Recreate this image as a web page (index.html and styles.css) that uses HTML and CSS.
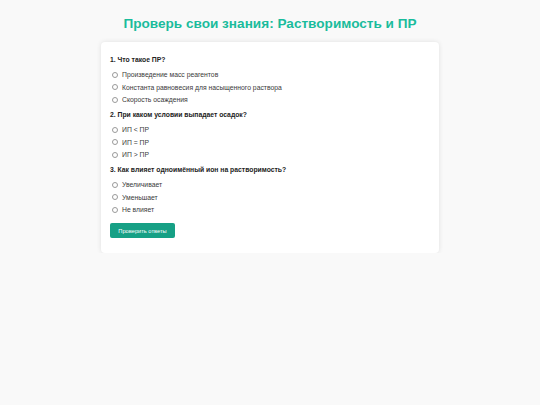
FILE: index.html
```html
<!DOCTYPE html>
<html lang="ru">
<head>
<meta charset="utf-8">
<title>Проверь свои знания</title>
<link rel="stylesheet" href="styles.css">
</head>
<body>
<h1 class="title">Проверь свои знания: Растворимость и ПР</h1>
<form class="card">
  <div class="question">
    <p class="q-text">1. Что такое ПР?</p>
    <label class="option"><input type="radio" name="q1"><span>Произведение масс реагентов</span></label>
    <label class="option"><input type="radio" name="q1"><span>Константа равновесия для насыщенного раствора</span></label>
    <label class="option"><input type="radio" name="q1"><span>Скорость осаждения</span></label>
  </div>
  <div class="question">
    <p class="q-text">2. При каком условии выпадает осадок?</p>
    <label class="option"><input type="radio" name="q2"><span>ИП &lt; ПР</span></label>
    <label class="option"><input type="radio" name="q2"><span>ИП = ПР</span></label>
    <label class="option"><input type="radio" name="q2"><span>ИП &gt; ПР</span></label>
  </div>
  <div class="question">
    <p class="q-text">3. Как влияет одноимённый ион на растворимость?</p>
    <label class="option"><input type="radio" name="q3"><span>Увеличивает</span></label>
    <label class="option"><input type="radio" name="q3"><span>Уменьшает</span></label>
    <label class="option"><input type="radio" name="q3"><span>Не влияет</span></label>
  </div>
  <button type="button" class="btn">Проверить ответы</button>
</form>
</body>
</html>
```
FILE: styles.css
```css
html, body {
  margin: 0;
  padding: 0;
}
body {
  background: #f9f9f9;
  font-family: "Liberation Sans", Arial, sans-serif;
  color: #222;
  padding-top: 15.5px;
}
.title {
  margin: 0 0 10.5px;
  text-align: center;
  font-size: 13.6px;
  line-height: 16px;
  font-weight: bold;
  color: #1abc9c;
}
.card {
  width: 338px;
  box-sizing: border-box;
  margin: 0 auto;
  background: #fff;
  border-radius: 4px;
  box-shadow: 0 0 5px rgba(0,0,0,0.1);
  padding: 13px 9px 14.5px;
}
.question {
  margin-bottom: 3.7px;
}
.q-text {
  margin: 0 0 3.7px;
  font-size: 6.8px;
  line-height: 10px;
  font-weight: bold;
  color: #222;
}
.option {
  display: flex;
  align-items: center;
  height: 12.5px;
  font-size: 6.8px;
  color: #3a3a3a;
}
.option input {
  appearance: none;
  -webkit-appearance: none;
  width: 6px;
  height: 6px;
  margin: 0 4px 0 2px;
  border: 0.5px solid #9a9a9a;
  border-radius: 50%;
  background: #fff;
  box-sizing: border-box;
}
.btn {
  display: block;
  margin-top: 7px;
  width: 65px;
  height: 15.5px;
  padding: 0;
  border: none;
  border-radius: 2px;
  background: #16a085;
  color: #fff;
  font-family: "Liberation Sans", Arial, sans-serif;
  font-size: 5.7px;
}
```
